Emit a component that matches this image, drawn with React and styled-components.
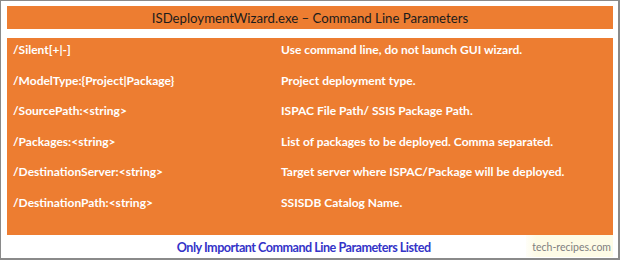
import React from "react";
import styled, { createGlobalStyle } from "styled-components";

const Global = createGlobalStyle`
  html, body { margin: 0; padding: 0; background: #ffffff; }
  body { font-family: Lato, "Open Sans", sans-serif; }
`;

const Frame = styled.div`
  box-sizing: border-box;
  width: 620px;
  height: 260px;
  border: 1px solid #8a8a8a;
  border-right-width: 2px;
  border-bottom-width: 2px;
  padding: 5px 5px 0 6px;
  display: flex;
  flex-direction: column;
  background: #ffffff;
`;

const Header = styled.div`
  height: 23px;
  background: #ed7d31;
  display: flex;
  align-items: center;
  justify-content: center;
  color: #1c1c1c;
  font-size: 13.2px;
  font-family: Lato, "Open Sans", sans-serif;
  padding-top: 1px;
  box-sizing: border-box;
`;

const Panel = styled.div`
  margin-top: 9px;
  height: 197px;
  background: #ed7d31;
  box-sizing: border-box;
  padding: 0 0 0 6px;
  display: grid;
  grid-template-columns: 268px 1fr;
  grid-auto-rows: 30.6px;
  align-content: start;
`;

const Cell = styled.div`
  display: flex;
  align-items: flex-start;
  padding-top: 4px;
  line-height: 15px;
  color: #ffffff;
  font-weight: 700;
  font-size: 12px;
  white-space: nowrap;
`;

const Footer = styled.div`
  flex: 1;
  display: flex;
  align-items: stretch;
  padding-bottom: 1px;
`;

const Note = styled.div`
  flex: 1;
  display: flex;
  align-items: center;
  justify-content: center;
  color: #3434c8;
  font-weight: 700;
  font-size: 12.6px;
  letter-spacing: -0.5px;
  padding-left: 74px;
  padding-top: 2px;
  white-space: nowrap;
`;

const Mark = styled.div`
  display: flex;
  align-items: center;
  padding: 2px 2px 0 6px;
  background: linear-gradient(90deg, rgba(253, 251, 232, 0.3) 0%, #fdfbe6 12%, #fdfbe6 100%);
  color: #808080;
  font-size: 10.5px;
  font-family: Lato, "Open Sans", sans-serif;
  white-space: nowrap;
`;

const rows = [
  ["/Silent[+|-]", "Use command line, do not launch GUI wizard."],
  ["/ModelType:{Project|Package}", "Project deployment type."],
  ["/SourcePath:<string>", "ISPAC File Path/ SSIS Package Path."],
  ["/Packages:<string>", "List of packages to be deployed. Comma separated."],
  ["/DestinationServer:<string>", "Target server where ISPAC/Package will be deployed."],
  ["/DestinationPath:<string>", "SSISDB Catalog Name."],
];

export default function App() {
  return (
    <>
      <Global />
      <Frame>
        <Header>ISDeploymentWizard.exe – Command Line Parameters</Header>
        <Panel>
          {rows.map(([k, v]) => (
            <React.Fragment key={k}>
              <Cell>{k}</Cell>
              <Cell>{v}</Cell>
            </React.Fragment>
          ))}
        </Panel>
        <Footer>
          <Note>Only Important Command Line Parameters Listed</Note>
          <Mark>tech-recipes.com</Mark>
        </Footer>
      </Frame>
    </>
  );
}
